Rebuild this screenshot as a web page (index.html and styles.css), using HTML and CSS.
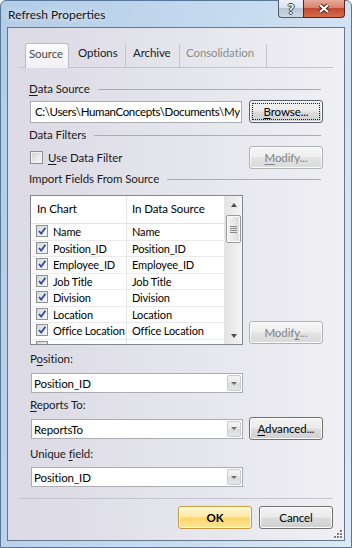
FILE: index.html
```html
<!DOCTYPE html>
<html lang="en">
<head>
    <meta charset="UTF-8">
    <meta name="viewport" content="width=device-width, initial-scale=1.0">
    <title>Refresh Properties</title>
    <link rel="stylesheet" href="styles.css">
</head>
<body>
    <div class="window">
        <div class="titlebar">
            <span class="title">Refresh Properties</span>
            <div class="caption-btns">
                <span class="cap cap-help">?</span>
                <span class="cap cap-close">
                    <svg width="14" height="11" viewBox="0 0 14 11">
                        <path d="M3 2 L11 9 M11 2 L3 9" stroke="#4b2418" stroke-width="4.2" fill="none"/>
                        <path d="M3 2 L11 9 M11 2 L3 9" stroke="#fff" stroke-width="2.2" fill="none"/>
                    </svg>
                </span>
            </div>
        </div>

        <div class="client">
            <div class="tabs">
                <span class="tab tab-active">Source</span>
                <span class="tab tab-options">Options</span>
                <span class="tab tab-archive">Archive</span>
                <span class="tab tab-disabled">Consolidation</span>
            </div>

            <div class="panel">
                <div class="group-head head-source"><u>D</u>ata Source</div>
                <div class="source-row">
                    <div class="textbox">C:\Users\HumanConcepts\Documents\My C</div>
                    <button class="btn btn-focus"><u>B</u>rowse...</button>
                </div>

                <div class="group-head head-filters">Data Filters</div>
                <div class="filter-row">
                    <label class="check-label"><span class="checkbox"></span><u>U</u>se Data Filter</label>
                    <button class="btn" disabled><u>M</u>odify...</button>
                </div>

                <div class="group-head head-import">Import Fields From Source</div>
                <div class="fields-row">
                    <div class="listbox">
                        <div class="list-table">
                            <div class="list-head">
                                <span class="cell">In Chart</span>
                                <span class="cell">In Data Source</span>
                            </div>
                            <div class="list-row"><span class="cell"><span class="mini-check"><svg width="10" height="10"><path d="M2 5 L4.2 7.6 L8.4 1.8" stroke="#2a4aa0" stroke-width="1.7" fill="none"/></svg></span>Name</span><span class="cell">Name</span></div>
                            <div class="list-row"><span class="cell"><span class="mini-check"><svg width="10" height="10"><path d="M2 5 L4.2 7.6 L8.4 1.8" stroke="#2a4aa0" stroke-width="1.7" fill="none"/></svg></span>Position_ID</span><span class="cell">Position_ID</span></div>
                            <div class="list-row"><span class="cell"><span class="mini-check"><svg width="10" height="10"><path d="M2 5 L4.2 7.6 L8.4 1.8" stroke="#2a4aa0" stroke-width="1.7" fill="none"/></svg></span>Employee_ID</span><span class="cell">Employee_ID</span></div>
                            <div class="list-row"><span class="cell"><span class="mini-check"><svg width="10" height="10"><path d="M2 5 L4.2 7.6 L8.4 1.8" stroke="#2a4aa0" stroke-width="1.7" fill="none"/></svg></span>Job Title</span><span class="cell">Job Title</span></div>
                            <div class="list-row"><span class="cell"><span class="mini-check"><svg width="10" height="10"><path d="M2 5 L4.2 7.6 L8.4 1.8" stroke="#2a4aa0" stroke-width="1.7" fill="none"/></svg></span>Division</span><span class="cell">Division</span></div>
                            <div class="list-row"><span class="cell"><span class="mini-check"><svg width="10" height="10"><path d="M2 5 L4.2 7.6 L8.4 1.8" stroke="#2a4aa0" stroke-width="1.7" fill="none"/></svg></span>Location</span><span class="cell">Location</span></div>
                            <div class="list-row"><span class="cell"><span class="mini-check"><svg width="10" height="10"><path d="M2 5 L4.2 7.6 L8.4 1.8" stroke="#2a4aa0" stroke-width="1.7" fill="none"/></svg></span>Office Location</span><span class="cell">Office Location</span></div>
                            <div class="list-row"><span class="cell"><span class="mini-check"></span></span><span class="cell"></span></div>
                        </div>
                        <div class="scrollbar">
                            <span class="sb-arrow sb-up"></span>
                            <span class="sb-thumb"><i></i><i></i><i></i><i></i></span>
                            <span class="sb-space"></span>
                            <span class="sb-arrow sb-down"></span>
                        </div>
                    </div>
                    <button class="btn btn-list" disabled>Modif<u>y</u>...</button>
                </div>

                <div class="field-label label-position">P<u>o</u>sition:</div>
                <div class="select select-position">
                    <span class="select-value">Position_ID</span>
                    <span class="select-arrow"></span>
                </div>

                <div class="field-label label-reports"><u>R</u>eports To:</div>
                <div class="reports-row">
                    <div class="select">
                        <span class="select-value">ReportsTo</span>
                        <span class="select-arrow"></span>
                    </div>
                    <button class="btn"><u>A</u>dvanced...</button>
                </div>

                <div class="field-label label-unique">Unique <u>f</u>ield:</div>
                <div class="select select-unique">
                    <span class="select-value">Position_ID</span>
                    <span class="select-arrow"></span>
                </div>
            </div>

            <div class="footer">
                <button class="btn btn-ok">OK</button>
                <button class="btn">Cancel</button>
            </div>

            <svg class="grip" width="9" height="9" viewBox="0 0 9 9">
                <rect x="7" y="1" width="2" height="2" fill="#fff"/>
                <rect x="7" y="4" width="2" height="2" fill="#fff"/>
                <rect x="4" y="4" width="2" height="2" fill="#fff"/>
                <rect x="7" y="7" width="2" height="2" fill="#fff"/>
                <rect x="4" y="7" width="2" height="2" fill="#fff"/>
                <rect x="1" y="7" width="2" height="2" fill="#fff"/>
                <rect x="6" y="0" width="2" height="2" fill="#7a7d84"/>
                <rect x="6" y="3" width="2" height="2" fill="#7a7d84"/>
                <rect x="3" y="3" width="2" height="2" fill="#7a7d84"/>
                <rect x="6" y="6" width="2" height="2" fill="#7a7d84"/>
                <rect x="3" y="6" width="2" height="2" fill="#7a7d84"/>
                <rect x="0" y="6" width="2" height="2" fill="#7a7d84"/>
            </svg>
        </div>
    </div>
</body>
</html>
```

FILE: styles.css
```css
* {
    box-sizing: border-box;
}
body {
    margin: 0;
    font-family: Lato, "Noto Sans", sans-serif;
    font-size: 11.5px;
    letter-spacing: -0.1px;
    color: #000;
    background: #fff;
}
u {
    text-decoration-thickness: 1px;
    text-underline-offset: 2px;
}

/* window frame */
.window {
    width: 352px;
    height: 548px;
    border: 1px solid #587697;
    border-radius: 6px 6px 0 0;
    background: linear-gradient(100deg, #b3cde7 0%, #c6dbef 55%, #dbe9f6 100%);
    display: flex;
    flex-direction: column;
}
.titlebar {
    height: 26px;
    flex-shrink: 0;
    display: flex;
    justify-content: space-between;
    padding: 0 6px 0 7px;
}
.title {
    align-self: center;
    font-size: 12px;
    letter-spacing: 0;
    color: #141414;
    text-shadow: 0 0 6px #fff;
}
.caption-btns {
    display: flex;
    height: 18px;
    margin-top: -1px;
}
.cap {
    height: 18px;
    display: flex;
    align-items: center;
    justify-content: center;
    border: 1px solid #4f5e70;
    border-top: none;
}
.cap-help {
    width: 25px;
    border-radius: 0 0 0 4px;
    border-right: none;
    background: linear-gradient(#edf2f8 0%, #dbe3ed 45%, #bac5d3 50%, #cfd8e4 100%);
    color: #fff;
    font-weight: bold;
    font-size: 14px;
    text-shadow: -1px 0 #2e3d50, 1px 0 #2e3d50, 0 -1px #2e3d50, 0 1px #2e3d50;
}
.cap-close {
    width: 42px;
    border-radius: 0 0 4px 0;
    border-color: #5b2419;
    background: linear-gradient(#e9ab99 0%, #d9826b 45%, #c24a32 50%, #d66a4c 100%);
}

/* dialog client area */
.client {
    flex: 1;
    margin: 0 6px 6px;
    border: 1px solid #66778a;
    background: linear-gradient(to right, #dbdae5, #efeff4);
    padding: 15px 11px 11px;
    display: flex;
    flex-direction: column;
    position: relative;
}

.tabs {
    display: flex;
    align-items: flex-end;
    height: 24px;
    margin-left: 6px;
}
.tab {
    height: 23px;
    line-height: 18px;
    padding-left: 6px;
    border-right: 1px solid #c3c4cd;
    color: #1b1b1b;
}
.tab-active {
    width: 44px;
    height: 25px;
    margin-bottom: -1px;
    padding: 1px 0 0 3px;
    background: linear-gradient(#fcfcfd, #f1f1f5);
    border: 1px solid #bbbcc6;
    border-bottom: none;
    border-radius: 3px 3px 0 0;
    color: #4a4a4a;
    position: relative;
    z-index: 1;
}
.tab-options {
    width: 57px;
    padding-left: 9px;
}
.tab-archive {
    width: 54px;
    padding-left: 7px;
}
.tab-disabled {
    width: 87px;
    color: #8c8c8c;
}

.panel {
    border-top: 1px solid #c3c4cc;
    border-bottom: 1px solid #c3c4cc;
    padding: 0 10px 0 11px;
    display: flex;
    flex-direction: column;
}

.group-head {
    display: flex;
    align-items: center;
    line-height: 14px;
    height: 14px;
    margin-left: -1px;
    color: #1b1b1b;
}
.group-head::after {
    content: "";
    flex: 1;
    border-top: 1px solid #a9abb6;
    margin: 1px 2px 0 8px;
}
.head-source {
    margin-top: 14px;
}
.head-filters {
    margin-top: 5px;
}
.head-import {
    margin-top: 3px;
}

.source-row,
.filter-row,
.reports-row {
    display: flex;
    justify-content: space-between;
}
.source-row {
    margin-top: 4px;
    align-items: flex-end;
}
.textbox {
    width: 212px;
    height: 22px;
    border: 1px solid #abadb3;
    background: #fff;
    padding-left: 4px;
    line-height: 19px;
    letter-spacing: -0.35px;
    white-space: nowrap;
    overflow: hidden;
}

.filter-row {
    margin-top: 4px;
    align-items: center;
}
.check-label {
    display: flex;
    align-items: center;
    line-height: 14px;
    color: #1b1b1b;
}
.checkbox {
    width: 13px;
    height: 13px;
    margin-right: 5px;
    border: 1px solid #8e8f8f;
    background: linear-gradient(135deg, #cfd1d4, #fbfbfb);
    box-shadow: inset 0 0 0 1px #f0f0f0;
}

/* buttons */
.btn {
    width: 74px;
    height: 23px;
    padding: 0;
    border: 1px solid #707070;
    border-radius: 3px;
    background: linear-gradient(#f3f3f3 0%, #ebebeb 48%, #dcdcdc 52%, #cfcfcf 100%);
    box-shadow: inset 0 0 0 1px #fbfbfb;
    font-family: Lato, "Noto Sans", sans-serif;
    font-size: 11.5px;
    letter-spacing: -0.1px;
    color: #000;
}
.btn:disabled {
    border-color: #adb2b5;
    background: linear-gradient(#f6f6f6 0%, #eeeeee 48%, #e2e2e2 52%, #dadada 100%);
    color: #838383;
}
.btn-focus {
    border-color: #58606b;
    outline: 1px dotted #222;
    outline-offset: -4px;
}
.btn-ok {
    border-color: #c29b45;
    background: linear-gradient(#fff6d3 0%, #fee9a4 48%, #fcd66c 52%, #fde497 100%);
    box-shadow: inset 0 0 0 1px #fffbe8;
    font-weight: bold;
}

/* fields list */
.fields-row {
    display: flex;
    justify-content: space-between;
    align-items: flex-end;
    margin-top: 9px;
}
.listbox {
    width: 213px;
    height: 150px;
    border: 1px solid #828790;
    background: #fff;
    display: flex;
    overflow: hidden;
}
.list-table {
    flex: 1;
    overflow: hidden;
}
.list-head,
.list-row {
    display: grid;
    grid-template-columns: 96px 1fr;
}
.list-head {
    height: 28px;
    line-height: 25px;
    border-bottom: 1px solid #e2e3e6;
}
.list-row {
    height: 16.5px;
    line-height: 15px;
    font-size: 11px;
    letter-spacing: -0.15px;
    border-bottom: 1px solid #ebebeb;
}
.cell {
    display: flex;
    align-items: flex-start;
    padding-left: 5px;
    white-space: nowrap;
    overflow: hidden;
    border-right: 1px solid #e5e5e5;
}
.list-head .cell:first-child {
    padding-left: 6px;
}
.mini-check {
    flex-shrink: 0;
    width: 12px;
    height: 12px;
    margin: 1px 5px 0 0;
    border: 1px solid #8e8f8f;
    background: linear-gradient(135deg, #d4d6d9, #fbfbfb);
    display: flex;
}

.scrollbar {
    width: 17px;
    display: flex;
    flex-direction: column;
    align-items: center;
    background: linear-gradient(to right, #e4e4e4, #f4f4f4);
}
.sb-arrow {
    height: 17px;
    width: 17px;
    display: flex;
    align-items: center;
    justify-content: center;
}
.sb-arrow::before {
    content: "";
    border-left: 3.5px solid transparent;
    border-right: 3.5px solid transparent;
}
.sb-up::before {
    border-bottom: 4px solid #4d4d4d;
}
.sb-down::before {
    border-top: 4px solid #4d4d4d;
}
.sb-thumb {
    width: 15px;
    height: 28px;
    margin-top: 2px;
    border: 1px solid #9b9b9b;
    border-radius: 2px;
    background: linear-gradient(to right, #f4f4f4, #dcdcdc);
    box-shadow: inset 0 0 0 1px #fcfcfc;
    display: flex;
    flex-direction: column;
    align-items: center;
    justify-content: center;
    gap: 1px;
}
.sb-thumb i {
    width: 7px;
    height: 1px;
    background: #8a8a8a;
}
.sb-space {
    flex: 1;
}
.btn-list {
    margin-bottom: 1px;
}

/* drop-downs */
.field-label {
    line-height: 14px;
    height: 14px;
    color: #1b1b1b;
}
.label-position {
    margin-top: 7px;
}
.label-reports {
    margin-top: 5px;
}
.label-unique {
    margin-top: 7px;
}
.select {
    width: 212px;
    height: 20px;
    margin-left: 1px;
    border: 1px solid #abadb3;
    background: #fff;
    display: flex;
    padding: 1px;
}
.select-value {
    flex: 1;
    padding-left: 1px;
    line-height: 17px;
}
.select-arrow {
    width: 14px;
    border: 1px solid #c9cbd0;
    border-radius: 2px;
    background: linear-gradient(#f5f5f5 0%, #e9e9e9 50%, #dadada 50%, #e6e6e6 100%);
    display: flex;
    align-items: center;
    justify-content: center;
}
.select-arrow::before {
    content: "";
    border-left: 3px solid transparent;
    border-right: 3px solid transparent;
    border-top: 3px solid #707070;
}
.select-position {
    margin-top: 7px;
}
.reports-row {
    margin-top: 5px;
    align-items: center;
}
.select-unique {
    margin-top: 6px;
    margin-bottom: 11px;
}

.footer {
    display: flex;
    justify-content: flex-end;
    gap: 7px;
    margin-top: 7px;
}

.grip {
    position: absolute;
    right: 1px;
    bottom: 1px;
}
```
